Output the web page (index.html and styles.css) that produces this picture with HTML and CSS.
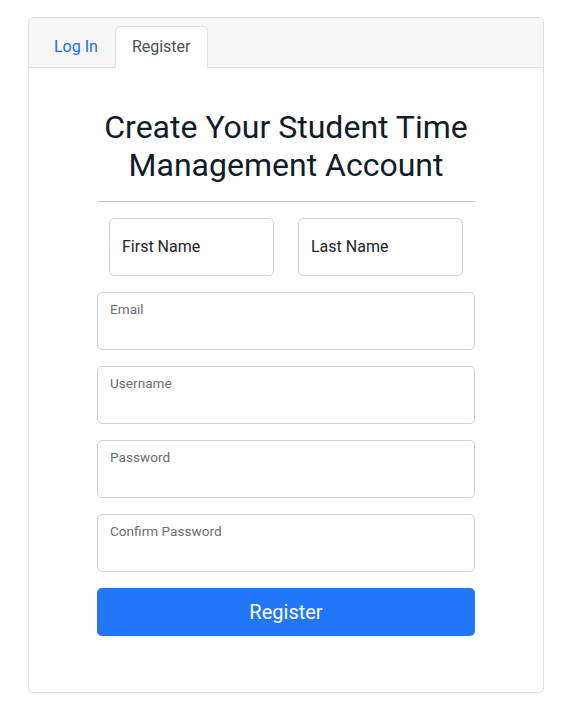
FILE: index.html
```html
<!DOCTYPE html>
<html lang="en">
<head>
<meta charset="utf-8">
<title>Register</title>
<link rel="stylesheet" href="styles.css">
</head>
<body>
<div class="page">
  <div class="card">
    <div class="card-header">
      <ul class="tabs">
        <li><a class="tab" href="#">Log In</a></li>
        <li><a class="tab active" href="#">Register</a></li>
      </ul>
    </div>
    <div class="card-body">
      <form class="form">
        <h1 class="title">Create Your Student Time Management Account</h1>
        <hr class="divider">
        <div class="name-row">
          <div class="field"><span class="label big">First Name</span></div>
          <div class="field"><span class="label big">Last Name</span></div>
        </div>
        <div class="field wide"><span class="label small">Email</span></div>
        <div class="field wide"><span class="label small">Username</span></div>
        <div class="field wide"><span class="label small">Password</span></div>
        <div class="field wide"><span class="label small">Confirm Password</span></div>
        <button type="button" class="btn">Register</button>
      </form>
    </div>
  </div>
</div>
</body>
</html>
```

FILE: styles.css
```css
* { box-sizing: border-box; }
html, body { margin: 0; padding: 0; background: #fff; }
body {
  font-family: Roboto, "Liberation Sans", sans-serif;
  font-size: 16px;
  line-height: 1.5;
  color: #212529;
}
.page {
  padding: 17px 0 0 28px;
}
.card {
  width: 516px;
  height: 676px;
  border: 1px solid #dfdfdf;
  border-radius: 5px;
  overflow: hidden;
  background: #fff;
}
.card-header {
  background: #f7f7f7;
  border-bottom: 1px solid #dfdfdf;
  padding: 8px 8px 0 8px;
}
.tabs {
  list-style: none;
  margin: 0 0 -1px 0;
  padding: 0;
  display: flex;
}
.tab {
  display: block;
  padding: 8px 16px;
  color: #0d6efd;
  text-decoration: none;
  border: 1px solid transparent;
  border-top-left-radius: 5px;
  border-top-right-radius: 5px;
}
.tab.active {
  color: #495057;
  background: #fff;
  border-color: #dee2e6 #dee2e6 #fff;
}
.card-body {
  padding: 16px;
}
.form {
  width: 378px;
  margin: 24px auto 0;
  display: flex;
  flex-direction: column;
}
.title {
  margin: 0;
  font-size: 32px;
  font-weight: 400;
  line-height: 1.2;
  text-align: center;
  color: #101c28;
}
.divider {
  margin: 16px 0;
  border: 0;
  border-top: 1px solid #c8c9cb;
}
.name-row {
  display: grid;
  grid-template-columns: 1fr 1fr;
  margin-bottom: 16px;
}
.name-row .field {
  margin: 0 12px;
}
.field {
  height: 58px;
  border: 1px solid #ced4da;
  border-radius: 5px;
  padding: 0 12px;
  background: #fff;
}
.field.wide {
  margin-bottom: 16px;
}
.label {
  display: block;
}
.label.big {
  padding-top: 16px;
  font-size: 16px;
  line-height: 24px;
  color: #212529;
}
.label.small {
  padding-top: 6px;
  font-size: 13.6px;
  line-height: 20px;
  color: #6b6e72;
}
.btn {
  height: 48px;
  border: 0;
  border-radius: 5px;
  background: #2277f9;
  color: #fff;
  font-family: Roboto, "Liberation Sans", sans-serif;
  font-size: 20px;
  line-height: 30px;
  padding: 8px 16px;
  cursor: pointer;
}
```
